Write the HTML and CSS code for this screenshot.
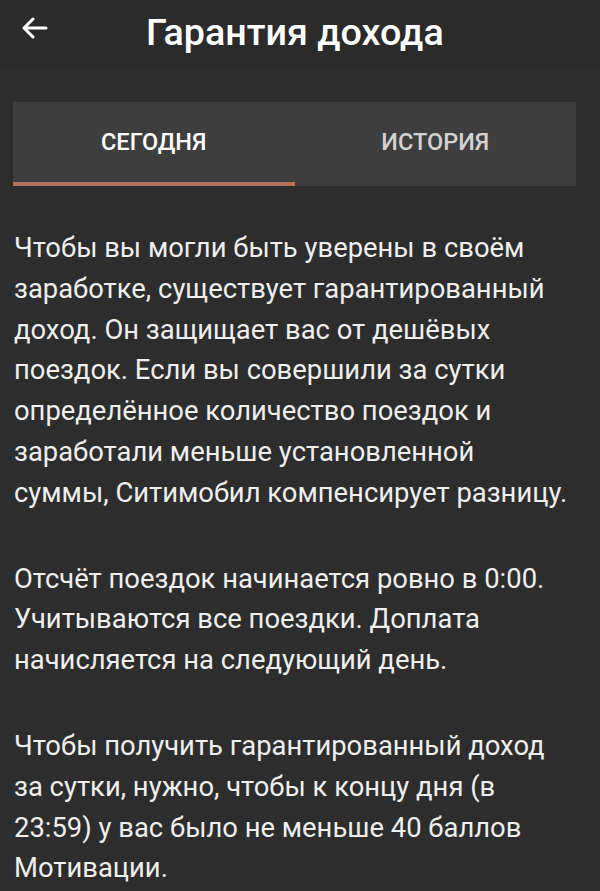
FILE: index.html
```html
<!DOCTYPE html>
<html lang="ru">
<head>
<meta charset="utf-8">
<link rel="stylesheet" href="styles.css">
</head>
<body>
<header class="topbar">
  <svg class="back" width="28" height="24" viewBox="0 0 28 24">
    <path d="M26 12H4M13 3L4 12L13 21" fill="none" stroke="#ffffff" stroke-width="3" stroke-linecap="round" stroke-linejoin="round"/>
  </svg>
  <h1 class="title">Гарантия дохода</h1>
</header>
<nav class="tabs">
  <div class="tab active">СЕГОДНЯ</div>
  <div class="tab">ИСТОРИЯ</div>
</nav>
<main class="content">
  <p>Чтобы вы могли быть уверены в своём заработке, существует гарантированный доход. Он защищает вас от дешёвых поездок. Если вы совершили за сутки определённое количество поездок и заработали меньше установленной суммы, Ситимобил компенсирует разницу.</p>
  <p>Отсчёт поездок начинается ровно в 0:00. Учитываются все поездки. Доплата начисляется на следующий день.</p>
  <p>Чтобы получить гарантированный доход за сутки, нужно, чтобы к концу дня (в 23:59) у вас было не меньше 40 баллов Мотивации.</p>
</main>
</body>
</html>
```
FILE: styles.css
```css
html, body {
  margin: 0;
  padding: 0;
  background: #2d2d2d;
  font-family: Roboto, "Noto Sans", sans-serif;
  color: #efefef;
}
.topbar {
  height: 70px;
  display: flex;
  align-items: center;
  background: #2b2b2b;
  padding-left: 20px;
  box-sizing: border-box;
}
.back {
  display: block;
  margin-top: -14px;
}
.title {
  margin: -6px 0 0 98px;
  font-size: 37.7px;
  font-weight: 500;
  color: #ffffff;
}
.tabs {
  margin: 32px 24px 0 13px;
  height: 84px;
  background: #3e3e3e;
  display: flex;
}
.tab {
  flex: 1;
  display: flex;
  align-items: center;
  justify-content: center;
  font-size: 23.5px;
  font-weight: 500;
  color: #d2d2d2;
  padding-bottom: 4px;
  box-sizing: border-box;
}
.tab.active {
  color: #ffffff;
  border-bottom: 4px solid #b9705b;
  padding-bottom: 0;
}
.content {
  padding: 42px 30px 0 14px;
}
.content p {
  margin: 0 0 45px 0;
  font-size: 27.4px;
  line-height: 40.8px;
}
```
